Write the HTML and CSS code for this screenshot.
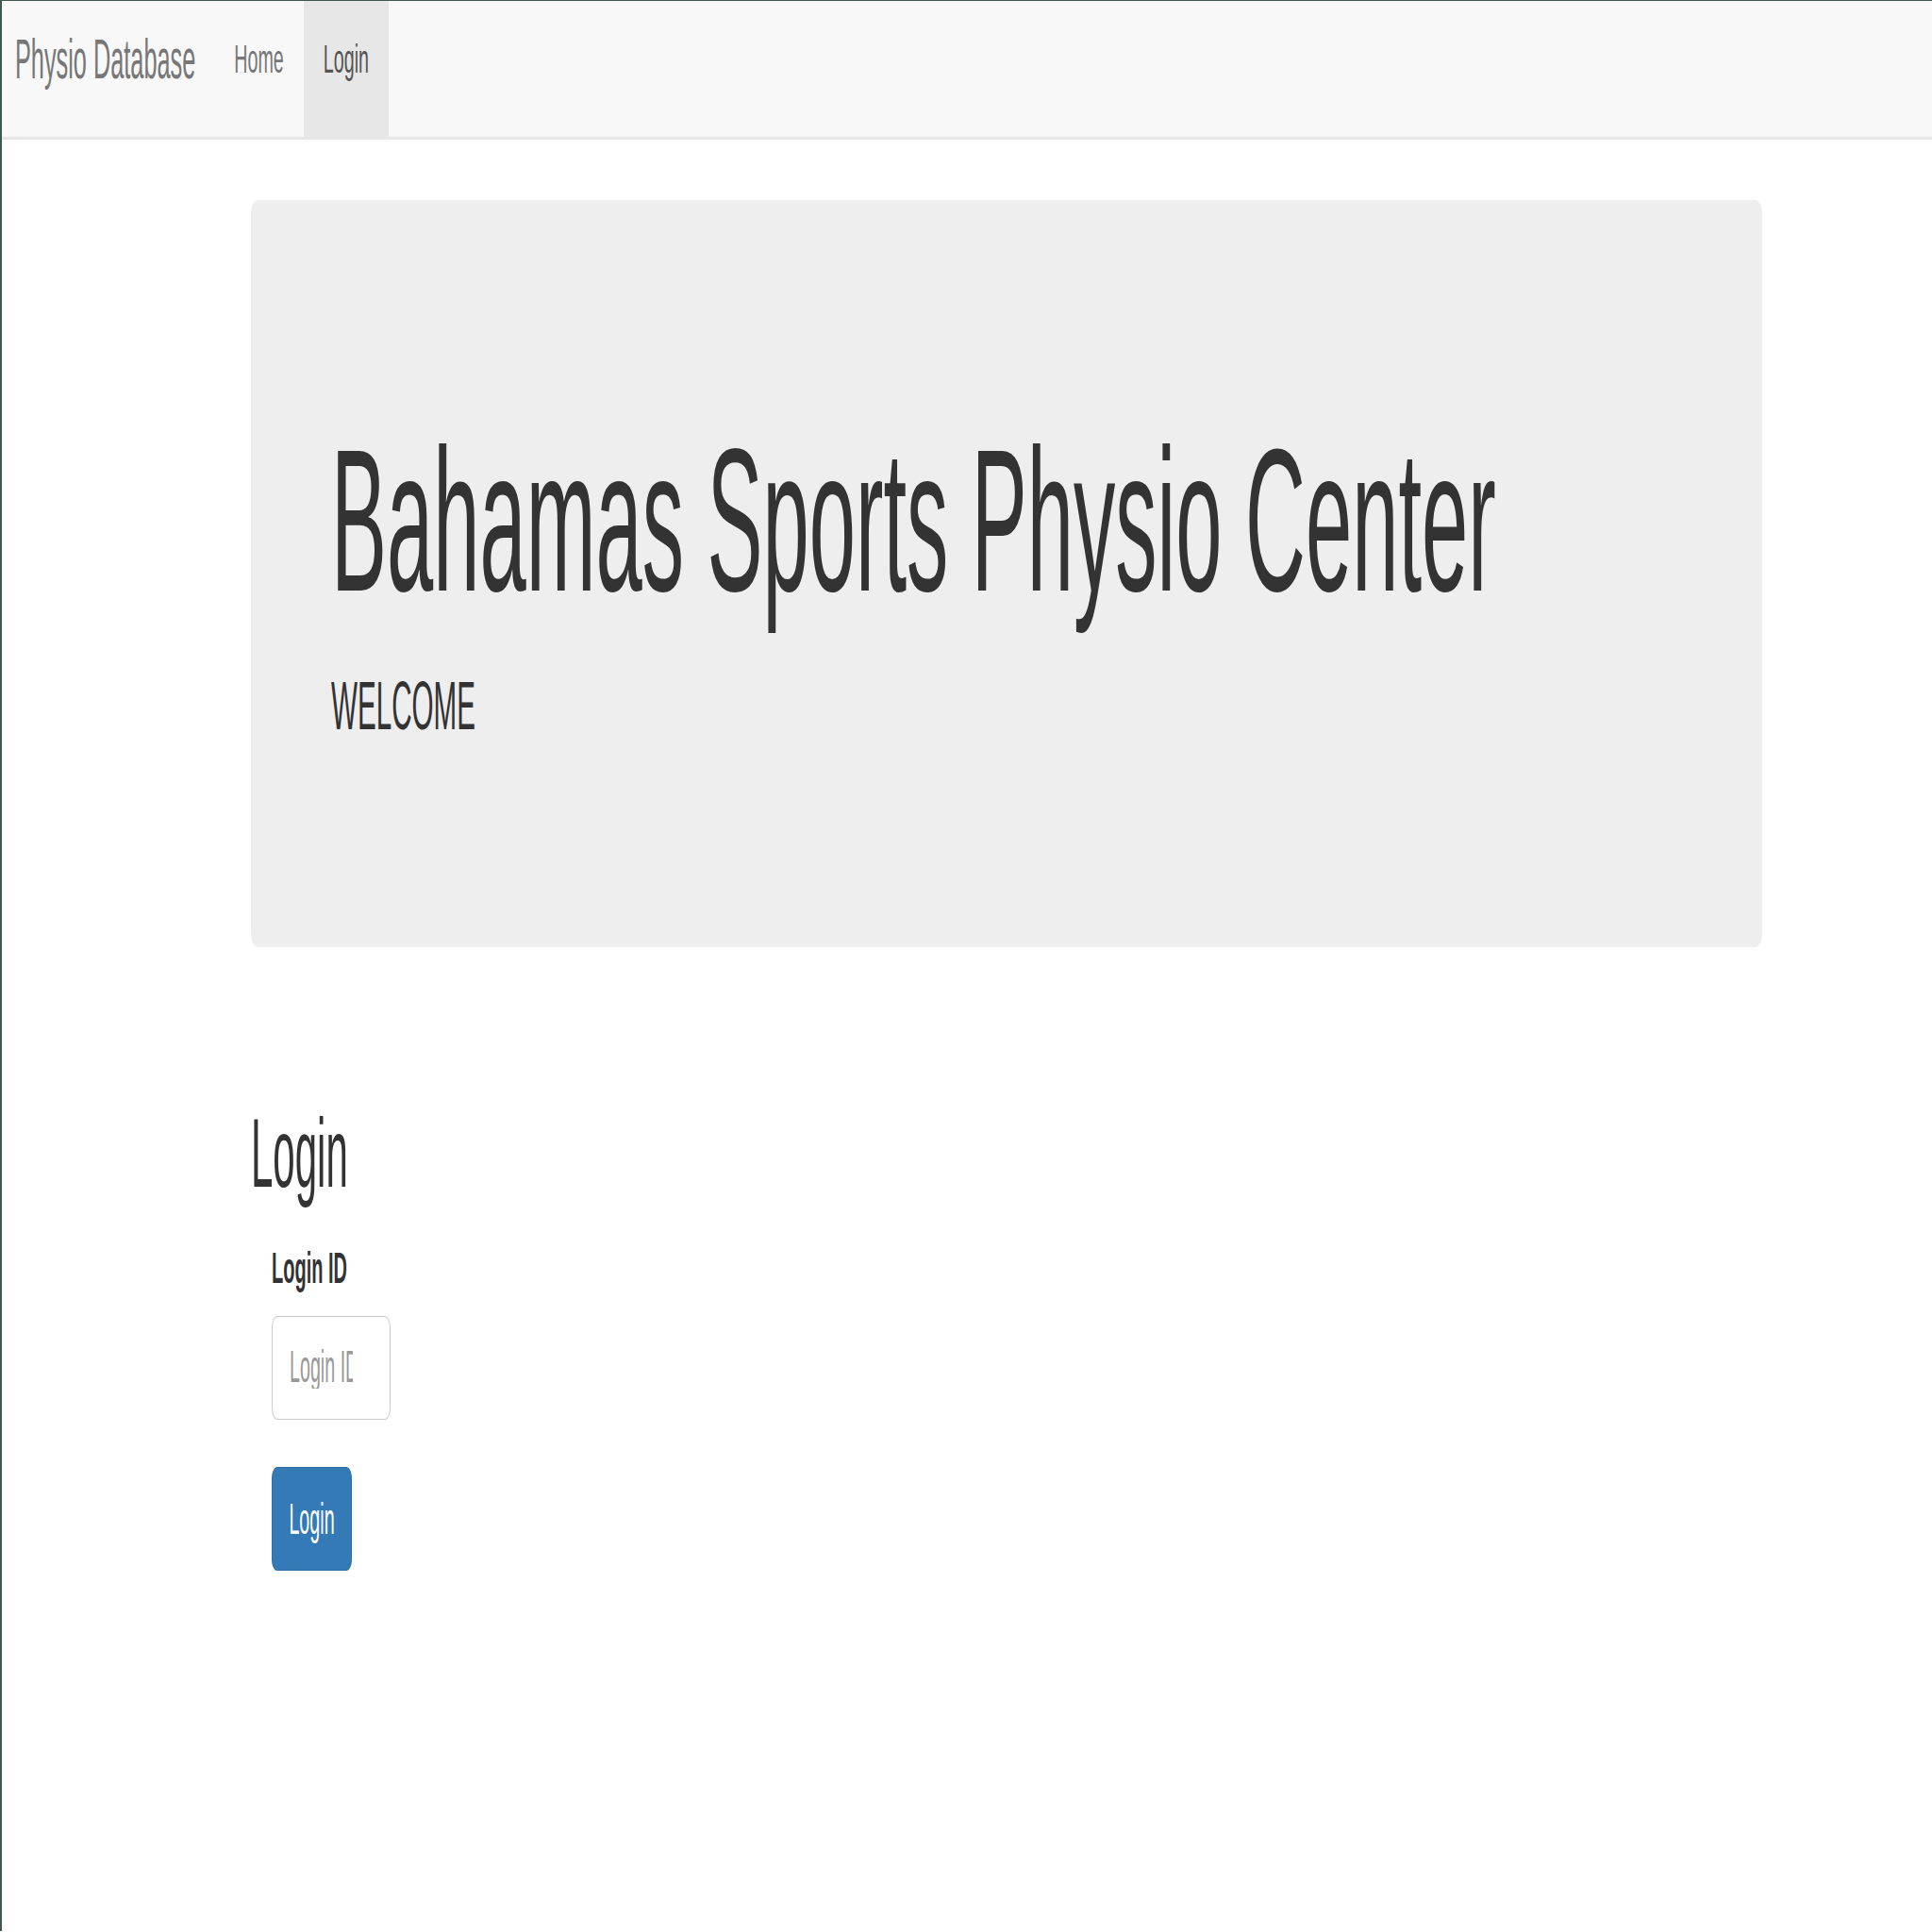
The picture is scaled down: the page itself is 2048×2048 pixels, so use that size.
FILE: index.html
```html
<!DOCTYPE html>
<html lang="en">
<head>
<meta charset="utf-8">
<title>Physio Database</title>
<link rel="stylesheet" href="styles.css">
</head>
<body>
<nav class="navbar">
  <a class="brand" href="#"><span class="tx tx-brand">Physio Database</span></a>
  <a class="nav-link" href="#"><span class="tx tx-nav">Home</span></a>
  <a class="nav-link active" href="#"><span class="tx tx-nav">Login</span></a>
</nav>
<main class="container">
  <section class="jumbotron">
    <h1 class="hero-title"><span class="tx tx-hero">Bahamas Sports Physio Center</span></h1>
    <p class="hero-sub"><span class="tx tx-sub">WELCOME</span></p>
  </section>
  <h2 class="page-title"><span class="tx tx-h2">Login</span></h2>
  <form class="login-form">
    <label class="form-label" for="loginid"><span class="tx tx-label">Login ID</span></label>
    <div class="field">
      <input class="field-input" id="loginid" type="text" placeholder="Login ID">
    </div>
    <button class="btn-primary" type="button"><span class="tx tx-btn">Login</span></button>
  </form>
</main>
</body>
</html>
```

FILE: styles.css
```css
html, body {
  margin: 0;
  padding: 0;
}
body {
  background: #ffffff;
  font-family: "Liberation Sans", Arial, sans-serif;
  color: #333333;
  border-top: 1px solid #3e5a4c;
  border-left: 2px solid #3e5a4c;
  min-height: 2047px;
  box-sizing: border-box;
}

.tx {
  display: inline-block;
  line-height: 1;
  white-space: nowrap;
  transform-origin: 50% 50%;
}

/* navbar */
.navbar {
  display: flex;
  height: 144px;
  background: #f8f8f8;
  border-bottom: 3px solid #e7e7e7;
}
.brand,
.nav-link {
  display: flex;
  align-items: center;
  padding-bottom: 18px;
  box-sizing: border-box;
  text-decoration: none;
}
.brand {
  padding-left: 14px;
  padding-right: 20px;
  color: #777777;
  font-size: 25.3px;
}
.nav-link {
  padding-left: 21px;
  padding-right: 21px;
  color: #777777;
  font-size: 19.7px;
}
.nav-link.active {
  background: #e7e7e7;
  color: #555555;
}
.tx-brand { transform: scaleY(2.32); }
.tx-nav { transform: scaleY(2.2); }

/* content */
.container {
  margin-left: 264px;
  width: 1602px;
}
.jumbotron {
  margin-top: 64px;
  height: 792px;
  box-sizing: border-box;
  background: #eeeeee;
  border-radius: 8px / 14px;
  padding: 297px 0 0 85px;
}
.hero-title {
  margin: 0;
  font-size: 88.5px;
  font-weight: normal;
  line-height: 1;
  height: 88px;
  color: #333333;
}
.tx-hero { transform: scaleY(2.44); }
.hero-sub {
  margin: 136px 0 0 0;
  font-size: 29.6px;
  line-height: 1;
  color: #333333;
}
.tx-sub { transform: scaleY(2.45); }

.page-title {
  margin: 199px 0 0 0;
  font-size: 42px;
  font-weight: normal;
  line-height: 1;
  height: 42px;
  color: #333333;
}
.tx-h2 { transform: scaleY(2.46); }

.login-form {
  margin-left: 22px;
  display: flex;
  flex-direction: column;
  align-items: flex-start;
}
.form-label {
  margin-top: 89px;
  font-size: 20px;
  font-weight: bold;
  line-height: 1;
  color: #333333;
}
.tx-label { transform: scaleY(2.3); }

.field {
  margin-top: 41px;
  width: 126px;
  height: 110px;
  box-sizing: border-box;
  border: 1px solid #cccccc;
  border-radius: 6px / 12px;
  background: #ffffff;
  display: flex;
  align-items: center;
  padding: 0 39px 0 18px;
  overflow: hidden;
}
.field-input {
  width: 100%;
  height: 20px;
  border: 0;
  padding: 0;
  margin: 0 0 4px 0;
  background: transparent;
  font-family: "Liberation Sans", Arial, sans-serif;
  font-size: 19.7px;
  color: #555555;
  outline: none;
  transform: scaleY(2.41);
  transform-origin: 50% 50%;
}
.field-input::placeholder {
  color: #999999;
  opacity: 1;
}

.btn-primary {
  margin-top: 50px;
  width: 85px;
  height: 110px;
  box-sizing: border-box;
  padding: 4px 17px 0 17px;
  border: 1px solid #2e6da4;
  border-radius: 6px / 12px;
  background: #337ab7;
  color: #ffffff;
  font-family: "Liberation Sans", Arial, sans-serif;
  font-size: 19.7px;
  display: flex;
  align-items: center;
  justify-content: center;
  cursor: pointer;
}
.tx-btn { transform: scaleY(2.33); }
```
